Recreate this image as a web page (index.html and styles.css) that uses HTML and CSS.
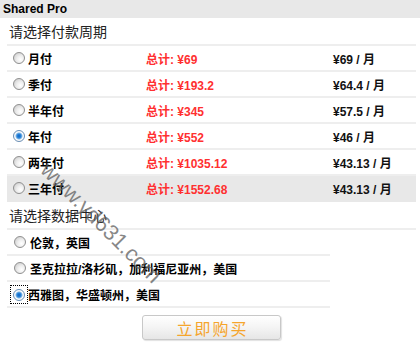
FILE: index.html
```html
<!DOCTYPE html>
<html lang="zh-CN">
<head>
  <meta charset="UTF-8" />
  <title>Shared Pro</title>
  <link rel="stylesheet" href="styles.css">
</head>
<body>

  <div class="plan-head">Shared Pro</div>

  <div class="section">
    <h3 class="section-title">请选择付款周期</h3>

    <div class="cycle-list">
      <label class="cycle-row">
        <span class="opt"><input type="radio" name="cycle" /> 月付</span>
        <span class="total">总计: ¥69</span>
        <span class="monthly">¥69 / 月</span>
      </label>
      <label class="cycle-row">
        <span class="opt"><input type="radio" name="cycle" /> 季付</span>
        <span class="total">总计: ¥193.2</span>
        <span class="monthly">¥64.4 / 月</span>
      </label>
      <label class="cycle-row">
        <span class="opt"><input type="radio" name="cycle" /> 半年付</span>
        <span class="total">总计: ¥345</span>
        <span class="monthly">¥57.5 / 月</span>
      </label>
      <label class="cycle-row">
        <span class="opt"><input type="radio" name="cycle" checked /> 年付</span>
        <span class="total">总计: ¥552</span>
        <span class="monthly">¥46 / 月</span>
      </label>
      <label class="cycle-row">
        <span class="opt"><input type="radio" name="cycle" /> 两年付</span>
        <span class="total">总计: ¥1035.12</span>
        <span class="monthly">¥43.13 / 月</span>
      </label>
      <label class="cycle-row hover">
        <span class="opt"><input type="radio" name="cycle" /> 三年付</span>
        <span class="total">总计: ¥1552.68</span>
        <span class="monthly">¥43.13 / 月</span>
      </label>
    </div>

    <h3 class="section-title">请选择数据中心</h3>

    <div class="dc-list">
      <label class="dc-row"><span class="radio-box"><input type="radio" name="dc" /></span>伦敦，英国</label>
      <label class="dc-row"><span class="radio-box"><input type="radio" name="dc" /></span>圣克拉拉/洛杉矶，加利福尼亚州，美国</label>
      <label class="dc-row"><span class="radio-box focus"><input type="radio" name="dc" checked /></span>西雅图，华盛顿州，美国</label>
    </div>

    <button class="buy-btn">立即购买</button>
  </div>

  <div class="watermark">www.yd631.com</div>

</body>
</html>
```

FILE: styles.css
```css
* {
  margin: 0;
  padding: 0;
  box-sizing: border-box;
}

body {
  width: 420px;
  height: 343px;
  overflow: hidden;
  background: #fff;
  font-family: 'Liberation Sans', 'Noto Sans CJK SC', sans-serif;
  color: #000;
  position: relative;
}

.plan-head {
  height: 18px;
  background: #e8e8e8;
  padding-left: 3px;
  font-size: 12px;
  font-weight: bold;
  line-height: 18px;
  color: #000;
}

.section {
  padding-left: 7px;
  padding-right: 4px;
}

.section-title {
  height: 28px;
  line-height: 28px;
  padding-left: 2px;
  font-size: 14px;
  font-weight: normal;
  color: #222;
  border-bottom: 2px solid #eeeeee;
}

.cycle-row {
  display: grid;
  grid-template-columns: 139px 187px 1fr;
  align-items: center;
  height: 26px;
  border-bottom: 2px solid #eeeeee;
  font-size: 12px;
  font-weight: bold;
}

.cycle-row.hover {
  background: #e8e8e8;
  border-bottom-color: #e8e8e8;
}

.opt {
  display: flex;
  align-items: center;
  padding-left: 6px;
}

.total {
  color: #ff3030;
}

.monthly {
  color: #111;
}

input[type="radio"] {
  -webkit-appearance: none;
  appearance: none;
  width: 12px;
  height: 12px;
  margin: 0 3px 0 0;
  border: 1px solid #8f8f8f;
  border-radius: 50%;
  background: radial-gradient(circle at 65% 65%, #ffffff 0, #eeeeee 40%, #c4c4c4 100%);
  flex: none;
}

input[type="radio"]:checked {
  border-color: #6a8fb5;
  background: radial-gradient(circle at 50% 50%, #0a63c8 0, #2c86d8 2px, #7fb5e6 3px, #ffffff 4px, #e4e4e4 100%);
}

.dc-list {
  width: 323px;
}

.dc-row {
  display: flex;
  align-items: center;
  height: 26px;
  border-bottom: 2px solid #eeeeee;
  font-size: 12px;
  font-weight: bold;
}

.radio-box {
  display: flex;
  align-items: center;
  padding: 2px 0 2px 6px;
  border: 1px dotted transparent;
}

.radio-box.focus {
  margin-left: 3px;
  padding: 3px 2px 2px 2px;
  border-color: #000;
}

.radio-box.focus input {
  margin-right: 0;
}

.buy-btn {
  display: block;
  width: 139px;
  height: 25px;
  margin: 7px 0 0 135px;
  border: 1px solid #c8c8c8;
  border-radius: 3px;
  background: linear-gradient(to bottom, #ffffff, #f4f4f4 50%, #e6e6e6);
  box-shadow: 1px 1px 1px rgba(0, 0, 0, 0.12);
  color: #f5a52c;
  font-family: 'Noto Sans CJK SC', sans-serif;
  font-size: 16px;
  letter-spacing: 2px;
  text-indent: 2px;
  line-height: 22px;
  cursor: pointer;
}

/* watermark sits over the rows */
.watermark {
  position: absolute;
  left: 22px;
  top: 207px;
  width: 152px;
  text-align: center;
  white-space: nowrap;
  transform: rotate(45deg);
  font-size: 22px;
  line-height: 26px;
  color: rgba(95, 95, 95, 0.75);
  pointer-events: none;
}
```
